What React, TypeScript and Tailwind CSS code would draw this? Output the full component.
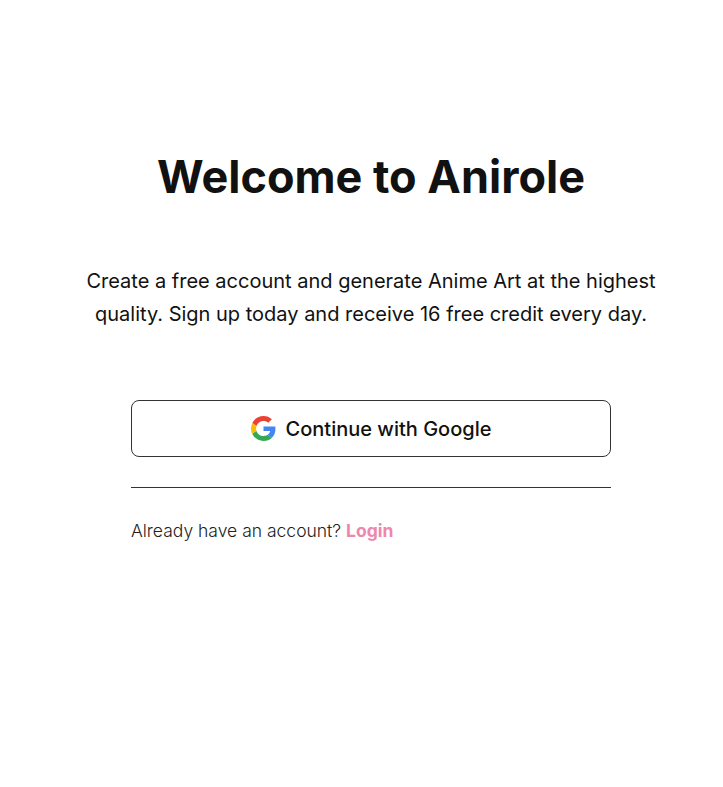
import React from 'react';

const GoogleIcon = () => (
  <svg width="25" height="25" viewBox="0 0 48 48">
    <path fill="#EA4335" d="M24 9.5c3.54 0 6.71 1.22 9.21 3.6l6.85-6.85C35.9 2.38 30.47 0 24 0 14.62 0 6.51 5.38 2.56 13.22l7.98 6.19C12.43 13.72 17.74 9.5 24 9.5z" />
    <path fill="#4285F4" d="M46.98 24.55c0-1.57-.15-3.09-.38-4.55H24v9.02h12.94c-.58 2.96-2.26 5.48-4.78 7.18l7.73 6c4.51-4.18 7.09-10.36 7.09-17.65z" />
    <path fill="#FBBC05" d="M10.53 28.59c-.48-1.45-.76-2.99-.76-4.59s.27-3.14.76-4.59l-7.98-6.19C.92 16.46 0 20.12 0 24c0 3.88.92 7.54 2.56 10.78l7.97-6.19z" />
    <path fill="#34A853" d="M24 48c6.48 0 11.93-2.13 15.89-5.81l-7.73-6c-2.15 1.45-4.92 2.3-8.16 2.3-6.26 0-11.57-4.22-13.47-9.91l-7.98 6.19C6.51 42.62 14.62 48 24 48z" />
  </svg>
);

const App: React.FC = () => {
  return (
    <div className="min-h-screen w-full bg-white font-['Inter',sans-serif] text-[#111111]">
      <div className="ml-[71px] flex w-[600px] flex-col items-center pt-[150px]">
        <h1 className="text-[45px] font-bold leading-[54px] text-center">Welcome to Anirole</h1>

        <p className="mt-[61px] w-[600px] text-center text-[20px] leading-[33px]">
          Create a free account and generate Anime Art at the highest quality. Sign up today and receive 16 free credit every day.
        </p>

        <div className="mt-[69px] w-[480px]">
          <button className="flex h-[57px] w-full items-center justify-center gap-[10px] rounded-lg border border-[#333333] bg-white text-[20px] font-medium">
            <GoogleIcon />
            <span>Continue with Google</span>
          </button>

          <div className="mt-[30px] border-t border-[#333333]"></div>

          <p className="mt-[29px] text-[17.5px] font-light leading-[27px] text-[#222222]">
            Already have an account? <a href="#" className="font-bold text-[#EE86AE]">Login</a>
          </p>
        </div>
      </div>
    </div>
  );
};

export default App;
